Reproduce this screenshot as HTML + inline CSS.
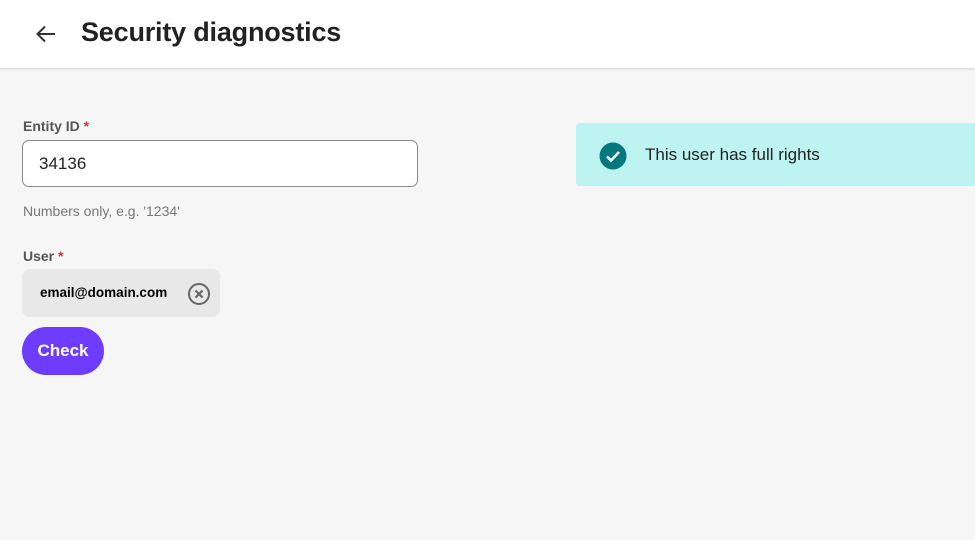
<!DOCTYPE html>
<html><head><style>
*{margin:0;padding:0;box-sizing:border-box}
body{width:975px;height:540px;background:#f6f6f6;font-family:"Liberation Sans",sans-serif;position:relative;overflow:hidden}
.hdr{position:absolute;left:0;top:0;width:975px;height:69px;background:#fff;border-bottom:1px solid #ddd;box-shadow:0 1px 2px rgba(0,0,0,.08)}
.title{position:absolute;left:81px;top:17px;font-size:27px;font-weight:bold;color:#222;letter-spacing:-0.2px}
.lbl{position:absolute;left:23px;font-size:14px;color:#555;font-weight:bold}
.lbl span{color:#d13438}
.inp{position:absolute;left:22px;top:140px;width:396px;height:47px;background:#fff;border:1.5px solid #8a8a8a;border-radius:7px;font-size:17px;color:#222;padding:13px 16px}
.hint{position:absolute;left:23px;top:203px;font-size:14px;color:#777}
.chip{position:absolute;left:22px;top:269px;width:198px;height:48px;background:#e8e8e8;border-radius:8px}
.chip .t{position:absolute;left:18px;top:16px;font-size:13.5px;color:#000;font-weight:bold}
.btn{position:absolute;left:22px;top:327px;width:82px;height:48px;background:#6e3cff;border-radius:24px;color:#fff;font-weight:bold;font-size:17px;text-align:center;line-height:48px}
.ok{position:absolute;left:576px;top:123px;width:399px;height:63px;background:#bdf3f1;border-radius:4px 0 0 4px}
.ok .t{position:absolute;left:69px;top:22px;font-size:17px;color:#222}
</style></head><body>
<div class="hdr">
<svg style="position:absolute;left:34px;top:22px" width="24" height="24" viewBox="0 0 24 24"><path d="M21 12H4M11 4.5 3.5 12 11 19.5" stroke="#333" stroke-width="2" fill="none"/></svg>
<div class="title">Security diagnostics</div>
</div>
<div class="lbl" style="top:118px">Entity ID <span>*</span></div>
<div class="inp">34136</div>
<div class="hint">Numbers only, e.g. '1234'</div>
<div class="lbl" style="top:248px">User <span>*</span></div>
<div class="chip"><div class="t">email@domain.com</div>
<svg style="position:absolute;left:165px;top:13px" width="24" height="24" viewBox="0 0 24 24"><circle cx="12" cy="12" r="10" stroke="#666" stroke-width="2" fill="none"/><path d="M8.5 8.5l7 7M15.5 8.5l-7 7" stroke="#666" stroke-width="2.2"/></svg></div>
<div class="btn">Check</div>
<div class="ok">
<svg style="position:absolute;left:23px;top:19px" width="28" height="28" viewBox="0 0 28 28"><circle cx="14" cy="14" r="13.5" fill="#03787c"/><path d="M8 14.5l4 4 8-8.5" stroke="#fff" stroke-width="2.6" fill="none"/></svg>
<div class="t">This user has full rights</div>
</div>
</body></html>
